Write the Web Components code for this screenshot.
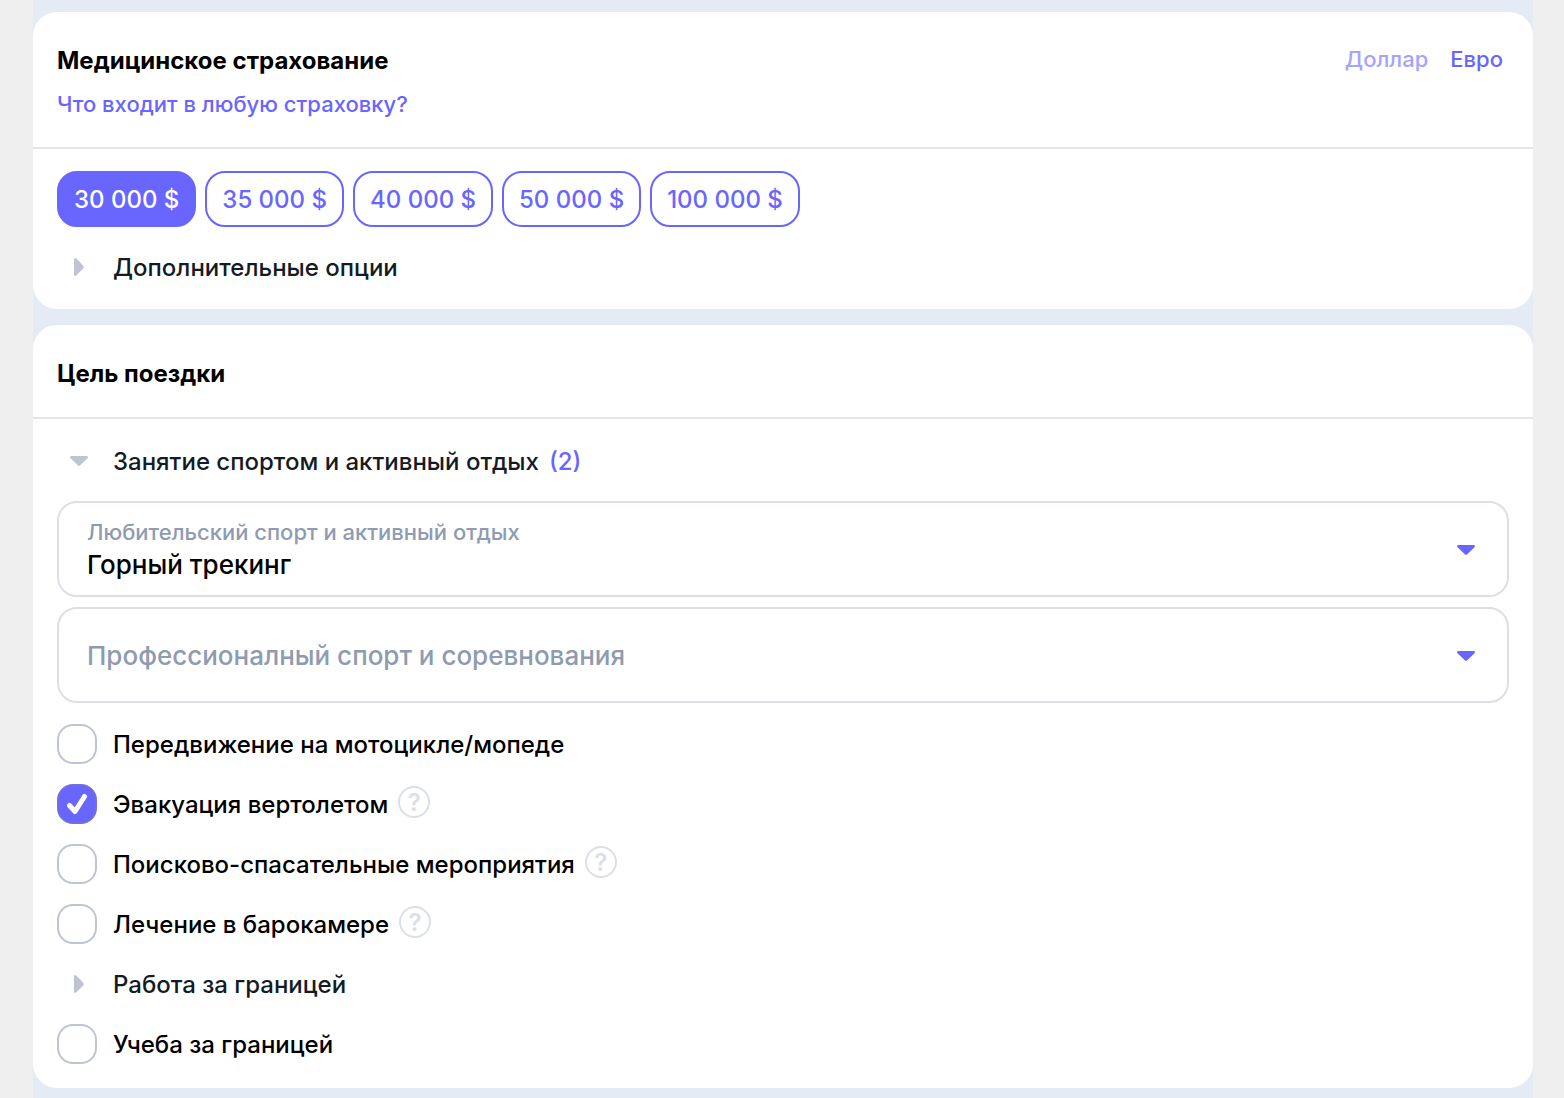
<!DOCTYPE html>
<html lang="ru">
<head>
<meta charset="utf-8">
<meta name="viewport" content="width=device-width, initial-scale=1">
<title>Страхование</title>
<style>
body {
    margin: 0;
    background: #efefef;
    color: #000;
    font: 500 24px/32px Inter, "Liberation Sans", sans-serif;
}
</style>
</head>
<body>

<insurance-page>
	<option-card heading="Медицинское страхование" link="Что входит в любую страховку?">
		<currency-switch slot="aside"></currency-switch>
		<sum-picker sums="30 000 $,35 000 $,40 000 $,50 000 $,100 000 $"></sum-picker>
		<fold-row>Дополнительные опции</fold-row>
	</option-card>
	<option-card heading="Цель поездки">
		<fold-row open count="(2)">Занятие спортом и активный отдых</fold-row>
		<sport-select label="Любительский спорт и активный отдых" value="Горный трекинг"></sport-select>
		<sport-select label="Профессионалный спорт и соревнования"></sport-select>
		<check-row class="first">Передвижение на мотоцикле/мопеде</check-row>
		<check-row checked hint>Эвакуация вертолетом</check-row>
		<check-row hint>Поисково-спасательные мероприятия</check-row>
		<check-row hint>Лечение в барокамере</check-row>
		<fold-row>Работа за границей</fold-row>
		<check-row class="last">Учеба за границей</check-row>
	</option-card>
</insurance-page>

<script>
function attach(el, html) {
  const template = document.createElement('template');
  template.innerHTML = html;
  const root = el.attachShadow({ mode: 'open' });
  root.appendChild(template.content.cloneNode(true));
  return root;
}

class InsurancePage extends HTMLElement {
  constructor() {
    super();
    attach(this, `
<style>
:host {
    display: flex;
    flex-direction: column;
    gap: 16px;
    box-sizing: border-box;
    min-height: 100vh;
    margin: 0 31px 0 33px;
    padding: 12px 0 10px;
    background: #e4ebf5;
}
</style>
<slot></slot>
`);
  }
}

class OptionCard extends HTMLElement {
  connectedCallback() {
    const root = attach(this, `
<style>
:host {
    display: block;
    background: #fff;
    border-radius: 24px;
}
header {
    display: flex;
    justify-content: space-between;
    align-items: flex-start;
    padding: 33px 30px 27px 24px;
    border-bottom: 2px solid #e1e6eb;
}
h2 {
    margin: 0;
    font-size: 24px;
    font-weight: 700;
    line-height: 32px;
}
a {
    display: block;
    margin-top: 12px;
    color: #6965ff;
    font-size: 22px;
    line-height: 31px;
    text-decoration: none;
}
.body {
    display: flex;
    flex-direction: column;
    gap: 20px;
    padding: 22px 24px;
}
::slotted(sport-select) {
    margin-bottom: -10px;
}
::slotted(.first) {
    margin-top: 11px;
}
::slotted(.last) {
    margin-bottom: 2px;
}
</style>
<header>
	<div><h2></h2></div>
	<slot name="aside"></slot>
</header>
<div class="body"><slot></slot></div>
`);
    root.querySelector('h2').textContent = this.getAttribute('heading');
    if (this.hasAttribute('link')) {
      const a = document.createElement('a');
      a.href = '#';
      a.textContent = this.getAttribute('link');
      root.querySelector('header div').appendChild(a);
    }
  }
}

class CurrencySwitch extends HTMLElement {
  constructor() {
    super();
    const root = attach(this, `
<style>
:host {
    display: flex;
    gap: 22px;
}
button {
    padding: 0;
    border: 0;
    background: none;
    color: #6965ff;
    font: inherit;
    font-size: 22px;
    line-height: 29px;
    cursor: pointer;
}
button[aria-pressed=true] {
    color: #a5a3ff;
}
</style>
<button type="button" aria-pressed="true">Доллар</button>
<button type="button" aria-pressed="false">Евро</button>
`);
    const buttons = root.querySelectorAll('button');
    buttons.forEach(button => button.addEventListener('click', () => {
      buttons.forEach(b => b.setAttribute('aria-pressed', b === button));
    }));
  }
}

class SumPicker extends HTMLElement {
  connectedCallback() {
    const root = attach(this, `
<style>
:host {
    display: flex;
    flex-wrap: wrap;
    gap: 9px;
}
button {
    height: 56px;
    padding: 2px 15px 0;
    border: 2px solid #6965ff;
    border-radius: 20px;
    background: #fff;
    color: #6965ff;
    font: inherit;
    cursor: pointer;
}
button[aria-pressed=true] {
    background: #6965ff;
    color: #fff;
}
</style>
`);
    this.getAttribute('sums').split(',').forEach((sum, i) => {
      const button = document.createElement('button');
      button.type = 'button';
      button.textContent = sum;
      button.setAttribute('aria-pressed', i === 0);
      button.addEventListener('click', () => {
        root.querySelectorAll('button').forEach(b => b.setAttribute('aria-pressed', b === button));
      });
      root.appendChild(button);
    });
  }
}

class FoldRow extends HTMLElement {
  connectedCallback() {
    const open = this.hasAttribute('open');
    const root = attach(this, `
<style>
:host {
    display: block;
}
button {
    display: flex;
    align-items: center;
    height: 40px;
    padding: 0;
    border: 0;
    background: none;
    color: #131b24;
    font: inherit;
    cursor: pointer;
}
svg {
    width: 20px;
    height: 20px;
    margin: 0 24px 0 12px;
    fill: #bec4d1;
}
:host([open]) svg {
    transform: rotate(90deg);
}
.text, .count {
    padding-top: 2px;
}
.count {
    margin-left: 10px;
    color: #6965ff;
}
</style>
<button type="button" aria-expanded="${open}">
	<svg viewBox="0 0 20 20"><path d="M5 2.4Q5 1 6 1Q6.700 1 7.500 1.800L14.300 8.800Q15.400 10 14.300 11.200L7.500 18.200Q6.700 19 6 19Q5 19 5 17.600Z"/></svg>
	<span class="text"><slot></slot></span>
</button>
`);
    if (this.hasAttribute('count')) {
      const count = document.createElement('span');
      count.className = 'count';
      count.textContent = this.getAttribute('count');
      root.querySelector('button').appendChild(count);
    }
  }
}

class SportSelect extends HTMLElement {
  connectedCallback() {
    const root = attach(this, `
<style>
:host {
    display: grid;
    grid-template-columns: 1fr auto;
    align-items: center;
    height: 96px;
    box-sizing: border-box;
    border: 2px solid #dce0e6;
    border-radius: 20px;
    background: #fff;
}
label {
    grid-area: 1 / 1;
    padding: 2px 0 0 28px;
    color: #8e9bb0;
    font-size: 26px;
    pointer-events: none;
    z-index: 1;
}
:host([value]) label {
    align-self: start;
    padding-top: 13px;
    font-size: 22px;
}
select {
    grid-area: 1 / 1 / 2 / 3;
    width: 100%;
    height: 92px;
    padding: 32px 28px 0;
    border: 0;
    border-radius: 18px;
    appearance: none;
    background: none;
    color: #000;
    font: inherit;
    font-size: 26px;
    line-height: 32px;
}
svg {
    grid-area: 1 / 2;
    width: 20px;
    height: 20px;
    margin-right: 31px;
    fill: #6965ff;
    pointer-events: none;
}
</style>
<label for="sport"></label>
<select id="sport"><option></option></select>
<svg viewBox="0 0 20 20"><path d="M2.400 6Q1 6 1 7Q1 7.700 1.800 8.500L8.800 15.300Q10 16.400 11.200 15.300L18.200 8.500Q19 7.700 19 7Q19 6 17.600 6Z"/></svg>
`);
    root.querySelector('label').textContent = this.getAttribute('label');
    root.querySelector('option').textContent = this.getAttribute('value') || '';
  }
}

class CheckRow extends HTMLElement {
  connectedCallback() {
    const root = attach(this, `
<style>
:host {
    display: flex;
    align-items: center;
    height: 40px;
}
.box {
    display: grid;
    width: 40px;
    height: 40px;
    margin-right: 16px;
}
input {
    grid-area: 1 / 1;
    width: 40px;
    height: 40px;
    margin: 0;
    box-sizing: border-box;
    border: 2px solid #bec4d1;
    border-radius: 16px;
    appearance: none;
    background: #fff;
}
input:checked {
    border-color: #716fe0;
    background: #6965ff;
}
svg {
    grid-area: 1 / 1;
    z-index: 1;
    fill: none;
    stroke: #fff;
    stroke-width: 5;
    stroke-linecap: round;
    stroke-linejoin: round;
    pointer-events: none;
    visibility: hidden;
}
input:checked + svg {
    visibility: visible;
}
label {
    padding-top: 2px;
}
.hint {
    width: 32px;
    height: 32px;
    margin: 0 0 4px 10px;
    padding: 2px 0 0;
    border: 2px solid #dcdfe8;
    border-radius: 50%;
    background: none;
    color: #dcdfe8;
    font: inherit;
    font-weight: 600;
    line-height: 26px;
}
</style>
<span class="box">
	<input type="checkbox" id="check">
	<svg viewBox="0 0 40 40"><path d="M12.500 21.500L18 27.500L27.500 12.500"/></svg>
</span>
<label for="check"><slot></slot></label>
`);
    root.querySelector('input').checked = this.hasAttribute('checked');
    if (this.hasAttribute('hint')) {
      const hint = document.createElement('button');
      hint.type = 'button';
      hint.className = 'hint';
      hint.textContent = '?';
      root.appendChild(hint);
    }
  }
}

window.customElements.define('insurance-page', InsurancePage);
window.customElements.define('option-card', OptionCard);
window.customElements.define('currency-switch', CurrencySwitch);
window.customElements.define('sum-picker', SumPicker);
window.customElements.define('fold-row', FoldRow);
window.customElements.define('sport-select', SportSelect);
window.customElements.define('check-row', CheckRow);
</script>
</body>
</html>
